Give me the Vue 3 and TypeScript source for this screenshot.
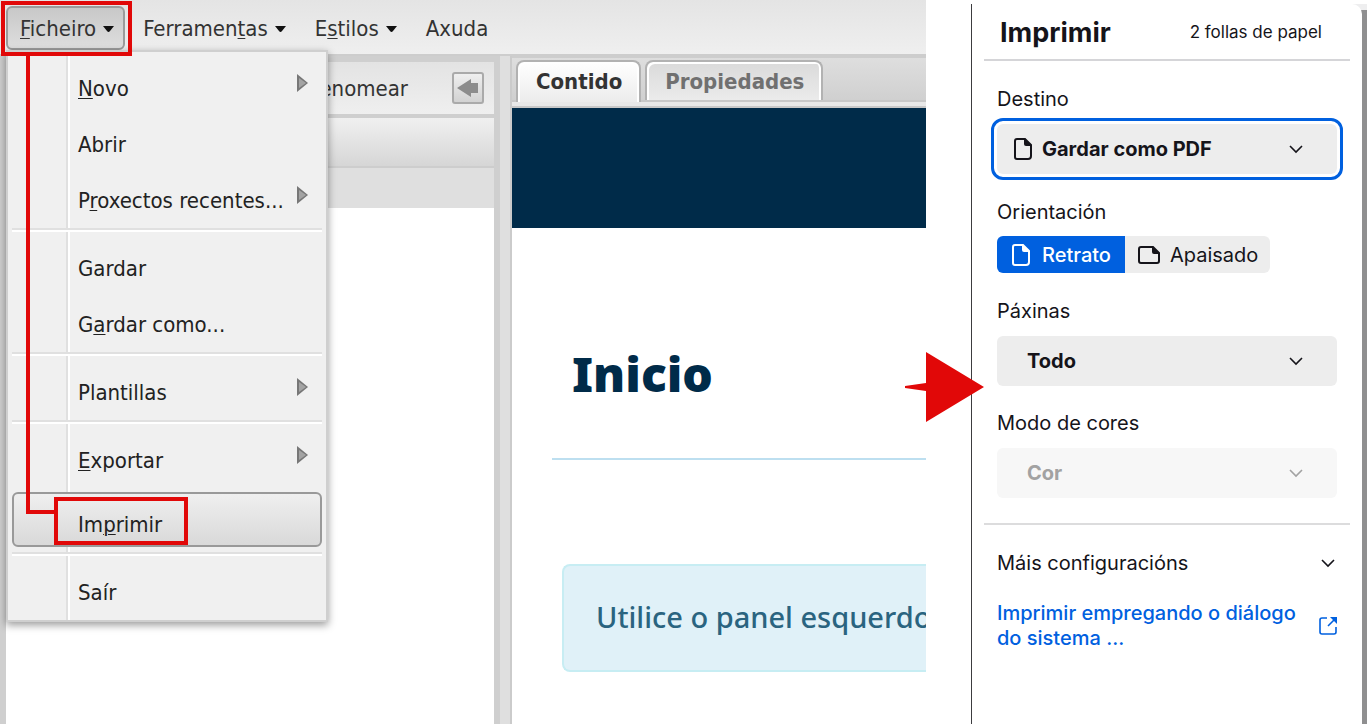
<script setup lang="ts">
import { ref } from 'vue'

interface Label {
  before: string
  key: string
  after: string
}
interface MenuItem extends Label {
  submenu?: boolean
  active?: boolean
}

const topMenus: Label[] = [
  { before: '', key: 'F', after: 'icheiro' },
  { before: 'Ferramen', key: 't', after: 'as' },
  { before: 'E', key: 's', after: 'tilos' },
]

const groups: MenuItem[][] = [
  [
    { before: '', key: 'N', after: 'ovo', submenu: true },
    { before: 'Abrir', key: '', after: '' },
    { before: 'P', key: 'r', after: 'oxectos recentes...', submenu: true },
  ],
  [
    { before: 'Gardar', key: '', after: '' },
    { before: 'G', key: 'a', after: 'rdar como...' },
  ],
  [{ before: 'Plantillas', key: '', after: '', submenu: true }],
  [
    { before: '', key: 'E', after: 'xportar', submenu: true },
    { before: 'Im', key: 'p', after: 'rimir', active: true },
  ],
  [{ before: 'Saír', key: '', after: '' }],
]

const orientation = ref('retrato')
</script>

<template>
  <div class="page">
    <main class="editor">
      <nav class="menubar">
        <button v-for="(m, i) in topMenus" :key="i" type="button" class="top-item" :class="{ open: i === 0 }">
          <span>{{ m.before }}<u>{{ m.key }}</u>{{ m.after }}</span>
          <svg class="caret" width="11" height="7" viewBox="0 0 11 7"><path d="M0 0H11L7 5Q5.500 7 4 5Z" fill="#111" /></svg>
        </button>
        <button type="button" class="top-item">Axuda</button>
      </nav>

      <div class="workspace">
        <section class="outline-panel">
          <div class="outline-toolbar">
            <button type="button" class="rename">Renomear</button>
            <button type="button" class="collapse" aria-label="Contraer">
              <svg width="22" height="18" viewBox="0 0 22 18"><path d="M0 9L14 0V4H21V14H14V18Z" fill="#8c8c8c" /></svg>
            </button>
          </div>
          <div class="outline-title"></div>
          <div class="outline-root"></div>
        </section>
        <div class="splitter"></div>
        <section class="content-panel">
          <div class="tabs">
            <button type="button" class="tab current">Contido</button>
            <button type="button" class="tab">Propiedades</button>
          </div>
          <div class="tab-strip"></div>
          <div class="banner"></div>
          <article class="document">
            <h1>Inicio</h1>
            <div class="notice">Utilice o panel esquerdo</div>
          </article>
        </section>
      </div>

      <div class="menu">
        <div v-for="(group, g) in groups" :key="g" class="menu-group">
          <button
            v-for="(item, i) in group"
            :key="i"
            type="button"
            class="menu-item"
            :class="{ active: item.active }"
          >
            <span>{{ item.before }}<u>{{ item.key }}</u>{{ item.after }}</span>
            <svg v-if="item.submenu" class="sub" width="11" height="18" viewBox="0 0 11 18">
              <path d="M0 0L11 9L0 18Z" fill="#777" /><path d="M2 4L9 9L2 14Z" fill="#a3a3a3" />
            </svg>
          </button>
        </div>
      </div>

      <svg class="callout" width="190" height="548" viewBox="0 0 190 548" fill="none" stroke="#e10808" stroke-width="4">
        <rect x="3" y="3" width="127" height="51" />
        <path d="M28 56V512H56" />
        <rect x="56" y="499" width="130" height="44" />
      </svg>
    </main>

    <aside class="dialog-area">
      <form class="print">
        <header class="print-head">
          <h2>Imprimir</h2>
          <p>2 follas de papel</p>
        </header>

        <div class="fields">
          <label for="dest">Destino</label>
          <div class="select-box focused">
            <svg class="file" width="20" height="24" viewBox="0 0 20 24">
              <path d="M4 2H12L18 8V19Q18 22 15 22H4Q2 22 2 20V4Q2 2 4 2Z" fill="none" stroke="currentColor" stroke-width="2" />
              <path d="M11 1L19 9H13Q11 9 11 7Z" fill="currentColor" />
            </svg>
            <select id="dest" class="with-icon"><option>Gardar como PDF</option></select>
            <svg class="chev" width="14" height="9" viewBox="0 0 14 9"><path d="M1 1L7 7L13 1" /></svg>
          </div>

          <fieldset>
            <legend>Orientación</legend>
            <div class="segmented">
              <label class="segment" :class="{ on: orientation === 'retrato' }">
                <input v-model="orientation" type="radio" name="orientation" value="retrato" />
                <svg width="20" height="24" viewBox="0 0 20 24">
                  <path d="M4 2H12L18 8V19Q18 22 15 22H4Q2 22 2 20V4Q2 2 4 2Z" fill="none" stroke="currentColor" stroke-width="2" />
                  <path d="M11 1L19 9H13Q11 9 11 7Z" fill="currentColor" />
                </svg>
                <span>Retrato</span>
              </label>
              <label class="segment wide" :class="{ on: orientation === 'apaisado' }">
                <input v-model="orientation" type="radio" name="orientation" value="apaisado" />
                <svg width="24" height="20" viewBox="0 0 24 20">
                  <path d="M4 2H16L22 8V16Q22 18 20 18H4Q2 18 2 16V4Q2 2 4 2Z" fill="none" stroke="currentColor" stroke-width="2" />
                  <path d="M15 1L23 9H17Q15 9 15 7Z" fill="currentColor" />
                </svg>
                <span>Apaisado</span>
              </label>
            </div>
          </fieldset>

          <label for="pages">Páxinas</label>
          <div class="select-box">
            <select id="pages"><option>Todo</option></select>
            <svg class="chev" width="14" height="9" viewBox="0 0 14 9"><path d="M1 1L7 7L13 1" /></svg>
          </div>

          <label for="color">Modo de cores</label>
          <div class="select-box disabled">
            <select id="color" disabled><option>Cor</option></select>
            <svg class="chev" width="14" height="9" viewBox="0 0 14 9"><path d="M1 1L7 7L13 1" /></svg>
          </div>
        </div>

        <div class="more">
          <button type="button" class="more-toggle">
            <span>Máis configuracións</span>
            <svg class="chev-inline" width="14" height="9" viewBox="0 0 14 9"><path d="M1 1L7 7L13 1" /></svg>
          </button>
          <a href="#" class="system-link">
            <span>Imprimir empregando o diálogo do sistema ...</span>
            <svg width="18" height="18" viewBox="0 0 18 18" fill="none" stroke="currentColor" stroke-width="1.6">
              <path d="M8 1H3Q1 1 1 3V15Q1 17 3 17H15Q17 17 17 15V10" />
              <path d="M9 9L16 2" />
              <path d="M11 0H18V7Z" fill="currentColor" stroke="none" />
            </svg>
          </a>
        </div>
      </form>
      <svg class="pointer" width="80" height="70" viewBox="0 0 80 70">
        <path d="M1 34L22 31V0L80 35L22 70V39L1 36Z" fill="#e10808" />
      </svg>
    </aside>
  </div>
</template>

<style>
body {
  margin: 0;
  background: #fff;
}
</style>

<style scoped>
* {
  box-sizing: border-box;
}
button,
select,
input {
  font: inherit;
  color: inherit;
  margin: 0;
}
button {
  border: 0;
  background: none;
  padding: 0;
  text-align: left;
}
svg {
  flex: none;
}
u {
  text-decoration-thickness: 1px;
  text-underline-offset: 2px;
}
.page {
  display: flex;
  gap: 45px;
  min-height: 100vh;
}

/* Editor window */
.editor {
  position: relative;
  flex: 1;
  min-width: 0;
  display: flex;
  flex-direction: column;
  overflow: hidden;
  font: 22px/30px 'DejaVu Sans Condensed', 'Noto Sans', sans-serif;
  color: #333;
}
.menubar {
  display: flex;
  gap: 4px;
  height: 56px;
  padding: 6px;
  background: linear-gradient(#e4e4e4, #efefef);
  border-bottom: 2px solid #cdcdcd;
}
.top-item {
  display: flex;
  align-items: center;
  gap: 7px;
  height: 44px;
  padding: 2px 9px 0 12px;
  border: 2px solid transparent;
  border-radius: 6px;
  white-space: nowrap;
}
.top-item.open {
  border-color: #9b9b9b;
  background: linear-gradient(#c8c8c8, #dedede);
}
.workspace {
  flex: 1;
  display: flex;
  background: #cfcfcf;
}
.outline-panel {
  display: flex;
  flex-direction: column;
  width: 500px;
  border: solid #cfcfcf;
  border-width: 6px 6px 0 6px;
  background: #fff;
}
.outline-toolbar {
  display: flex;
  align-items: center;
  justify-content: flex-end;
  gap: 44px;
  height: 56px;
  padding-right: 10px;
  background: linear-gradient(#e3e3e3, #efefef);
  border-bottom: 4px solid #cfcfcf;
}
.rename {
  padding-top: 2px;
}
.collapse {
  display: grid;
  place-items: center;
  width: 32px;
  height: 32px;
  border: 2px solid #aaa;
  border-radius: 3px;
  background: linear-gradient(#efefef, #d2d2d2);
}
.outline-title {
  height: 50px;
  background: linear-gradient(#f0f0f0, #d6d6d6);
  border-bottom: 2px solid #cdcdcd;
}
.outline-root {
  height: 40px;
  background: #dfdfdf;
}
.splitter {
  width: 12px;
  background: #dfdfdf;
  border-right: 2px solid #cbcbcb;
}
.content-panel {
  flex: 1;
  min-width: 0;
  background: #fff;
}
.tabs {
  display: flex;
  gap: 4px;
  height: 46px;
  padding: 2px 4px 0;
  border-top: 2px solid #cdcdcd;
  border-bottom: 2px solid #c8c8c8;
  background: linear-gradient(#dedede, #d0d0d0);
}
.tab {
  height: 40px;
  padding: 2px 17px 0 18px;
  border: 2px solid #b2b2b2;
  border-bottom: 0;
  border-radius: 8px 8px 0 0;
  background: linear-gradient(#dadada, #ebebeb);
  box-shadow: inset 2px 2px #fff, inset -2px 0 #fff;
  font-weight: bold;
  color: #707070;
}
.tab.current {
  height: 42px;
  padding-bottom: 2px;
  margin-bottom: -2px;
  background: linear-gradient(#fff, #ececec);
  color: #333;
}
.tab-strip {
  height: 6px;
  background: #e8e8e8;
  border-bottom: 2px solid #c8c8c8;
}
.banner {
  height: 120px;
  background: #002b49;
}
.document {
  padding-left: 40px;
  font-family: 'Noto Sans', sans-serif;
}
h1 {
  margin: 0;
  padding: 115px 0 53px 20px;
  border-bottom: 2px solid #bddff0;
  font-size: 48px;
  line-height: 62px;
  font-weight: 900;
  color: #002b49;
}
.notice {
  margin: 104px 0 0 10px;
  padding: 31px 0 33px 32px;
  border: 2px solid #c7edf3;
  border-right: 0;
  border-radius: 8px 0 0 8px;
  background: #e0f1f8;
  color: #2a6480;
  font-size: 29px;
  line-height: 40px;
  font-weight: 500;
  white-space: nowrap;
  overflow: hidden;
}

/* Open menu */
.menu {
  position: absolute;
  left: 6px;
  top: 50px;
  width: 322px;
  padding: 8px 4px 0;
  border: 2px solid #cfcfcf;
  background: linear-gradient(90deg, #e0e0e0 2px, #fff 2px) 58px 0 / 4px 100% no-repeat #f0f0f0;
  box-shadow: 0 3px 8px rgba(0, 0, 0, 0.4);
  color: #222;
}
.menu-group + .menu-group {
  padding-top: 10px;
  border-top: 2px solid #e0e0e0;
  box-shadow: inset 0 2px #fff;
}
.menu-item {
  display: flex;
  justify-content: space-between;
  align-items: center;
  width: 100%;
  height: 56px;
  padding: 2px 14px 0 66px;
  white-space: nowrap;
}
.menu-item .sub {
  margin-bottom: 12px;
}
.menu-item.active {
  height: 55px;
  margin: 4px 0 5px;
  padding: 10px 0 0 64px;
  border: 2px solid #999;
  border-radius: 6px;
  background: linear-gradient(#efefef, #d9d9d9);
}
.callout {
  position: absolute;
  left: 0;
  top: 0;
}

/* Print dialog */
.dialog-area {
  position: relative;
  width: 396px;
  margin-top: 4px;
  padding-right: 5px;
  display: flex;
  background: linear-gradient(#eeeeef 6px, #8f8f90 6px);
  font: 20px/25px Inter, sans-serif;
  color: #15141a;
}
.print {
  flex: 1;
  padding: 0 12px;
  border-left: 1px solid #3c3c3f;
  border-radius: 0 10px 0 0;
  background: #fff;
}
.print-head {
  display: flex;
  justify-content: space-between;
  align-items: center;
  height: 57px;
  padding: 2px 28px 0 16px;
  border-bottom: 2px solid #d5d5d8;
}
h2 {
  margin: 0;
  font-size: 27px;
  line-height: 32px;
  font-weight: 700;
}
.print-head p {
  margin: 0;
  font-size: 17px;
}
.fields {
  display: flex;
  flex-direction: column;
  padding: 26px 13px 25px;
  border-bottom: 2px solid #dcdcdd;
}
.select-box {
  position: relative;
  margin: 12px 0 26px;
  border-radius: 6px;
  background: #ededed;
}
.select-box + label {
  margin-top: -1px;
}
.select-box.focused {
  outline: 3px solid #0060df;
  outline-offset: 3px;
}
.select-box.disabled {
  margin-bottom: 0;
  background: #f7f7f7;
  color: #a2a2a2;
}
select {
  display: block;
  width: 100%;
  height: 50px;
  padding: 1px 56px 0 30px;
  border: 0;
  background: none;
  appearance: none;
  outline: 0;
  opacity: 1;
  font-weight: 700;
}
select.with-icon {
  padding-left: 45px;
}
.file {
  position: absolute;
  left: 16px;
  top: 13px;
}
.chev {
  position: absolute;
  right: 34px;
  top: 21px;
  pointer-events: none;
}
.chev,
.chev-inline {
  fill: none;
  stroke: currentColor;
  stroke-width: 1.6;
}
fieldset {
  margin: 0 0 26px;
  padding: 0;
  border: 0;
}
legend {
  padding: 0;
  margin-bottom: 11px;
}
.segmented {
  display: flex;
}
.segment {
  display: flex;
  align-items: center;
  gap: 11px;
  height: 37px;
  padding: 0 14px;
  background: #ededed;
  border-radius: 6px 0 0 6px;
  font-weight: 500;
}
.segment.wide {
  gap: 9px;
  padding: 0 12px;
  border-radius: 0 6px 6px 0;
  font-weight: 400;
}
.segment span {
  padding-top: 2px;
}
.segment.on {
  background: #0060df;
  color: #fff;
}
.segment input {
  position: absolute;
  opacity: 0;
}
.more {
  padding: 26px 13px;
}
.more-toggle {
  display: flex;
  justify-content: space-between;
  align-items: center;
  width: 100%;
  padding-right: 2px;
}
.system-link {
  display: flex;
  justify-content: space-between;
  align-items: center;
  gap: 20px;
  margin-top: 25px;
  color: #0060df;
  font-weight: 500;
  text-decoration: none;
}
.pointer {
  position: absolute;
  left: -67px;
  top: 348px;
}
</style>
